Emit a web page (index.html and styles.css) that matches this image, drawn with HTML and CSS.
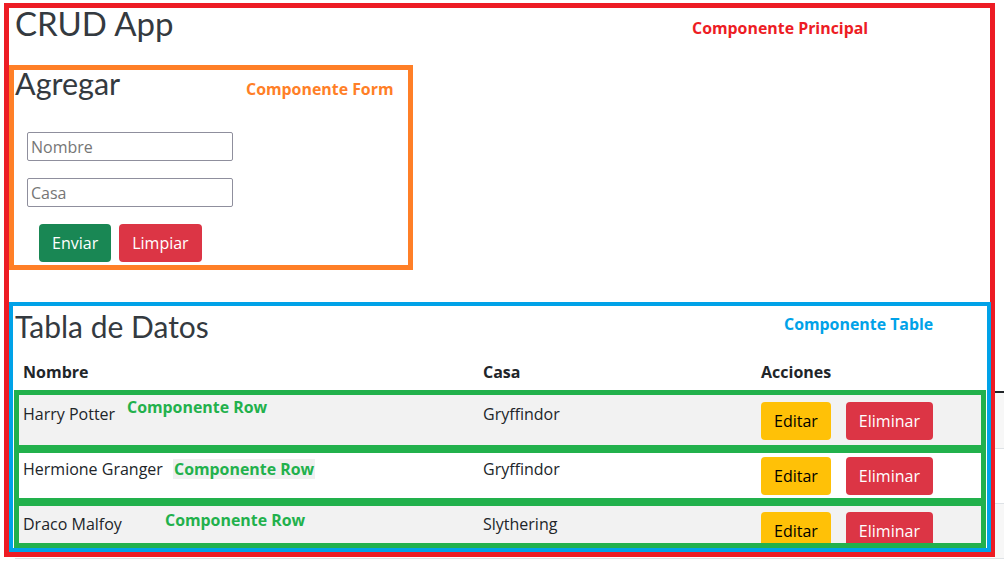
FILE: index.html
```html
<!DOCTYPE html>
<html lang="es">
<head>
<meta charset="utf-8">
<title>CRUD App</title>
<link rel="stylesheet" href="styles.css">
</head>
<body>
<div class="page">
  <div class="stage">
    <main class="app">
      <span class="tag tag-principal">Componente Principal</span>
      <h1 class="app-title">CRUD App</h1>

      <section class="form-card">
        <span class="tag tag-form">Componente Form</span>
        <h2 class="section-title form-title">Agregar</h2>
        <form class="form">
          <input class="field" type="text" placeholder="Nombre">
          <input class="field" type="text" placeholder="Casa">
          <div class="form-actions">
            <button type="button" class="btn btn-success">Enviar</button>
            <button type="button" class="btn btn-danger">Limpiar</button>
          </div>
        </form>
      </section>

      <section class="table-card">
        <span class="tag tag-table">Componente Table</span>
        <h2 class="section-title table-title">Tabla de Datos</h2>
        <div class="thead">
          <div class="cell th">Nombre</div>
          <div class="cell th">Casa</div>
          <div class="cell th">Acciones</div>
        </div>
        <div class="row row-1 striped">
          <span class="tag tag-row tag-row-1">Componente Row</span>
          <div class="cell">Harry Potter</div>
          <div class="cell">Gryffindor</div>
          <div class="cell actions">
            <button type="button" class="btn btn-warning">Editar</button>
            <button type="button" class="btn btn-danger">Eliminar</button>
          </div>
        </div>
        <div class="row row-2">
          <span class="tag tag-row tag-row-2">Componente Row</span>
          <div class="cell">Hermione Granger</div>
          <div class="cell">Gryffindor</div>
          <div class="cell actions">
            <button type="button" class="btn btn-warning">Editar</button>
            <button type="button" class="btn btn-danger">Eliminar</button>
          </div>
        </div>
        <div class="row row-3 striped">
          <span class="tag tag-row tag-row-3">Componente Row</span>
          <div class="cell">Draco Malfoy</div>
          <div class="cell">Slythering</div>
          <div class="cell actions">
            <button type="button" class="btn btn-warning">Editar</button>
            <button type="button" class="btn btn-danger">Eliminar</button>
          </div>
        </div>
      </section>
    </main>
    <div class="edge">
      <div class="edge-row edge-head striped"></div>
      <div class="edge-row"></div>
      <div class="edge-row striped"></div>
    </div>
  </div>
  <div class="underline"></div>
</div>
</body>
</html>
```

FILE: styles.css
```css
* { box-sizing: border-box; }

html, body {
  margin: 0;
  padding: 0;
  background: #fff;
}

body {
  font-family: "Open Sans", "Liberation Sans", sans-serif;
  font-size: 16px;
  line-height: 24px;
  color: #212529;
}

.page {
  width: 1004px;
  height: 566px;
  overflow: hidden;
}

.stage {
  display: flex;
  align-items: flex-start;
}

/* Red: main component */
.app {
  position: relative;
  margin: 3px 0 0 4px;
  width: 991px;
  height: 554px;
  border: 5px solid #ED1C24;
  display: flex;
  flex-direction: column;
}

.app-title {
  margin: 0;
  padding-left: 6px;
  height: 57px;
  font-family: "Lato", "Noto Sans", sans-serif;
  font-weight: 400;
  font-size: 33px;
  line-height: 30px;
  color: #343a40;
}

.section-title {
  margin: 0;
  font-family: "Lato", "Noto Sans", sans-serif;
  font-weight: 400;
  font-size: 30px;
  color: #343a40;
}

/* Orange: form component */
.form-card {
  position: relative;
  width: 404px;
  height: 205px;
  border: 5px solid #FF7F27;
}

.form-title {
  padding-left: 1px;
  font-size: 30.5px;
  line-height: 27px;
  height: 27px;
}

.form {
  margin: 35px 0 0 13px;
  display: flex;
  flex-direction: column;
  align-items: flex-start;
  gap: 17px;
}

.field {
  width: 206px;
  height: 29px;
  border: 1px solid #8f8f9d;
  border-radius: 2px;
  padding: 0 3px;
  font-family: "Open Sans", sans-serif;
  font-size: 16px;
  color: #212529;
  background: #fff;
}

.field::placeholder { color: #767676; }

.form-actions {
  display: flex;
  gap: 8px;
  margin-left: 12px;
}

.btn {
  font-family: "Open Sans", sans-serif;
  font-size: 16px;
  line-height: 24px;
  padding: 6px 12px;
  border: 1px solid transparent;
  border-radius: 4px;
  cursor: pointer;
}

.btn-success { background: #198754; color: #fff; }
.btn-danger  { background: #dc3545; color: #fff; }
.btn-warning { background: #ffc107; color: #000; }

/* Blue: table component */
.table-card {
  position: relative;
  margin-top: 32px;
  width: 982px;
  height: 250px;
  border: 4px solid #00A2E8;
}

.table-title {
  padding-left: 2px;
  line-height: 41px;
  height: 41px;
}

.thead,
.row {
  display: grid;
  grid-template-columns: 460px 278px 1fr;
  align-items: start;
}

.thead {
  height: 43px;
  padding: 13px 0 0 6px;
}

.cell {
  padding: 0 4px;
}

.th { font-weight: 700; }

/* Green: row component */
.row {
  position: relative;
  margin: 0 1px;
  border: 5px solid #22B14C;
  background: #fff;
}

.row.striped { background: #f2f2f2; }

.row-1 { height: 60px; padding-top: 7px; }
.row-2 { height: 55px; padding-top: 4px; margin-top: -2px; }
.row-3 { height: 47px; padding-top: 6px; margin-top: -2px; overflow: hidden; }

.actions {
  display: flex;
  gap: 15px;
}

/* Annotation labels */
.tag {
  position: absolute;
  font-family: "Open Sans", "Liberation Sans", sans-serif;
  font-weight: 700;
  font-size: 15.9px;
  line-height: 20px;
  white-space: nowrap;
}

.tag-principal { left: 683px; top: 10px; color: #ED1C24; }
.tag-form      { left: 232px; top: 9px;  color: #FF7F27; }
.tag-table     { left: 771px; top: 8px;  color: #00A2E8; }
.tag-row       { color: #22B14C; }
.tag-row-1     { left: 108px; top: 2px; }
.tag-row-2     { left: 154px; top: 6px; padding: 0 1px; background: #f0f0f0; }
.tag-row-3     { left: 146px; top: 4px; }

/* Table edge visible beyond the annotation box */
.edge {
  width: 9px;
  margin-top: 391px;
}

.edge-row {
  height: 55px;
  border-top: 1px solid #dee2e6;
}

.edge-head {
  height: 57px;
  border-top: 2px solid #212529;
}

.edge-row.striped { background: #f7f7f7; }

.underline {
  margin-left: 15px;
  border-top: 1px solid #dee2e6;
}
```
